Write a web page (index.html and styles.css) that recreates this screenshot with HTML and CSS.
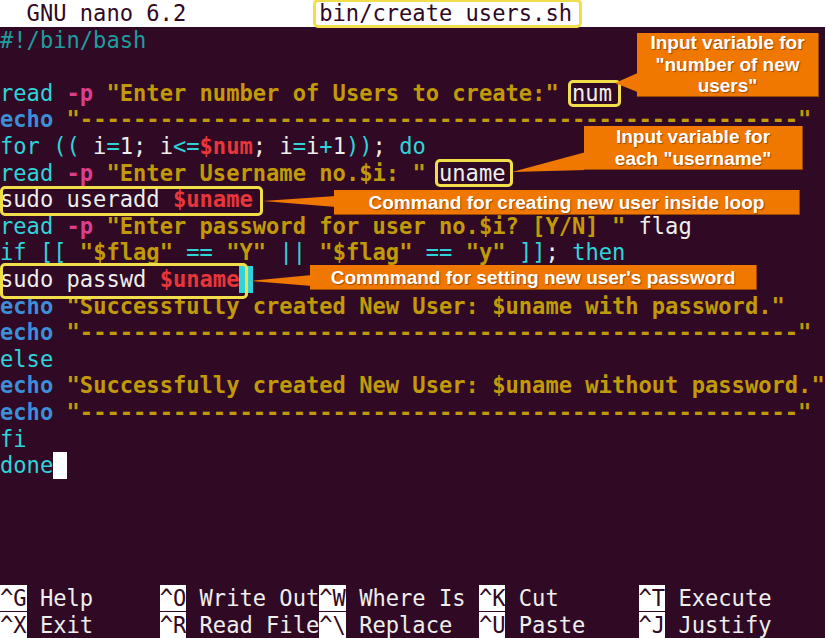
FILE: index.html
```html
<!DOCTYPE html>
<html lang="en">

<head>
    <meta charset="UTF-8">
    <meta name="viewport" content="width=device-width, initial-scale=1.0">
    <title>GNU nano 6.2 - bin/create users.sh</title>

    <link rel="stylesheet" href="styles.css">
</head>

<body>
    <div class="term">
        <div class="row title">  GNU nano 6.2          <span class="mark mark-title">bin/create users.sh</span></div>

        <div class="editor">
            <div class="row"><span class="cm">#!/bin/bash</span></div>
            <div class="row"> </div>
            <div class="row"><span class="kw">read</span> <span class="op">-p</span> <span class="st">"Enter number of Users to create:"</span> <span class="mark mark-num">num</span></div>
            <div class="row"><span class="bi">echo</span> <span class="st">"------------------------------------------------------"</span></div>
            <div class="row"><span class="kw">for ((</span> i<span class="kw">=</span>1; i<span class="kw">&lt;=</span><span class="va">$num</span>; i<span class="kw">=</span>i<span class="kw">+</span>1<span class="kw">))</span>; <span class="kw">do</span></div>
            <div class="row"><span class="kw">read</span> <span class="op">-p</span> <span class="st">"Enter Username no.$i: "</span> <span class="mark mark-uname">uname</span></div>
            <div class="row"><span class="mark mark-add">sudo useradd <span class="va">$uname</span></span></div>
            <div class="row"><span class="kw">read</span> <span class="op">-p</span> <span class="st">"Enter password for user no.$i? [Y/N] "</span> flag</div>
            <div class="row"><span class="kw">if [[</span> <span class="st">"$flag"</span> <span class="kw">==</span> <span class="st">"Y"</span> <span class="kw">||</span> <span class="st">"$flag"</span> <span class="kw">==</span> <span class="st">"y"</span> <span class="kw">]]</span>; <span class="kw">then</span></div>
            <div class="row"><span class="mark mark-passwd">sudo passwd <span class="va">$uname</span></span><span class="cursor cursor-cyan"> </span></div>
            <div class="row"><span class="bi">echo</span> <span class="st">"Successfully created New User: $uname with password."</span></div>
            <div class="row"><span class="bi">echo</span> <span class="st">"------------------------------------------------------"</span></div>
            <div class="row"><span class="kw">else</span></div>
            <div class="row"><span class="bi">echo</span> <span class="st">"Successfully created New User: $uname without password."</span></div>
            <div class="row"><span class="bi">echo</span> <span class="st">"------------------------------------------------------"</span></div>
            <div class="row"><span class="kw">fi</span></div>
            <div class="row"><span class="kw">done</span><span class="cursor"> </span></div>
            <div class="row"> </div>
            <div class="row"> </div>
            <div class="row"> </div>
            <div class="row"> </div>
        </div>

        <div class="shortcuts">
            <div class="row"><span class="key">^G</span> Help     <span class="key">^O</span> Write Out<span class="key">^W</span> Where Is <span class="key">^K</span> Cut      <span class="key">^T</span> Execute</div>
            <div class="row"><span class="key">^X</span> Exit     <span class="key">^R</span> Read File<span class="key">^\</span> Replace  <span class="key">^U</span> Paste    <span class="key">^J</span> Justify</div>
        </div>

        <!-- annotations -->
        <svg class="pointers" width="825" height="638" viewBox="0 0 825 638">
            <polygon points="615,83 640,72 640,93" />
            <polygon points="512,172 586,152 586,170" />
            <polygon points="263,201 336,196 336,207" />
            <polygon points="250,281 312,275 312,286" />
        </svg>

        <div class="callout callout-num">Input variable for<br>"number of new<br>users"</div>
        <div class="callout callout-uname">Input variable for<br>each "username"</div>
        <div class="callout callout-add">Command for creating new user inside loop</div>
        <div class="callout callout-passwd">Commmand for setting new user's password</div>
    </div>
</body>

</html>
```

FILE: styles.css
```css
:root {
    --bg: #300a24;
    --fg: #eeeeec;
    --cyan: #2fd3da;
    --teal: #1f9c9f;
    --blue: #3b8fd8;
    --gold: #c09a08;
    --pink: #dc3f8c;
    --red: #e8363a;
    --mark: #f2de4a;
    --orange: #f07800;
    --row: 26.6px;
}

* {
    margin: 0;
    padding: 0;
    box-sizing: border-box;
}

body {
    width: 825px;
    height: 638px;
    overflow: hidden;
    background: var(--bg);
}

.term {
    position: relative;
    width: 825px;
    height: 638px;
    overflow: hidden;
    background: var(--bg);
    color: var(--fg);
    font-family: "DejaVu Sans Mono", "Liberation Mono", monospace;
    font-size: 22.1px;
}

.row {
    height: var(--row);
    line-height: var(--row);
    white-space: pre;
}

.title {
    background: #ffffff;
    color: var(--bg);
}

/* syntax colours, nano shows some groups in bold */
.cm { color: var(--teal); }
.kw { color: var(--cyan); }
.bi { color: var(--blue); font-weight: bold; }
.st { color: var(--gold); font-weight: bold; }
.op { color: var(--pink); font-weight: bold; }
.va { color: var(--red); font-weight: bold; }

.cursor {
    display: inline-block;
    vertical-align: top;
    height: var(--row);
    background: #ffffff;
}

.cursor-cyan {
    background: var(--cyan);
}

/* yellow highlight boxes */
.mark {
    position: relative;
    display: inline-block;
    vertical-align: top;
    height: var(--row);
}

.mark::after {
    content: "";
    position: absolute;
    border: 3px solid var(--mark);
    border-radius: 5px;
}

.mark-title::after { top: -1px; right: -10px; bottom: -1px; left: -6px; }
.mark-num::after { top: 0; right: -9px; bottom: -1px; left: -4px; }
.mark-uname::after { top: -1px; right: -7px; bottom: -1px; left: -4px; }
.mark-add::after { top: 0; right: -10px; bottom: -3px; left: 0; }
.mark-passwd::after { top: -3px; right: -9px; bottom: -6px; left: 0; }

/* shortcut bar */
.key {
    background: #ffffff;
    color: var(--bg);
}

/* annotations */
.pointers {
    position: absolute;
    left: 0;
    top: 0;
    pointer-events: none;
}

.pointers polygon {
    fill: var(--orange);
}

.callout {
    position: absolute;
    background: var(--orange);
    border-right: 1px solid #9a4a00;
    border-bottom: 1px solid #9a4a00;
    color: #ffffff;
    font-family: "Liberation Sans", Arial, sans-serif;
    font-weight: bold;
    font-size: 19px;
    text-align: center;
    text-shadow: 1px 1px 1px rgba(60, 20, 0, 0.45);
    display: flex;
    align-items: center;
    justify-content: center;
}

.callout-num {
    left: 637px;
    top: 33px;
    width: 182px;
    height: 64px;
    line-height: 21.5px;
}

.callout-uname {
    left: 584px;
    top: 126px;
    width: 219px;
    height: 44px;
    line-height: 22px;
}

.callout-add {
    left: 334px;
    top: 190px;
    width: 466px;
    height: 25px;
    line-height: 25px;
}

.callout-passwd {
    left: 310px;
    top: 265px;
    width: 447px;
    height: 25px;
    line-height: 25px;
}
```
